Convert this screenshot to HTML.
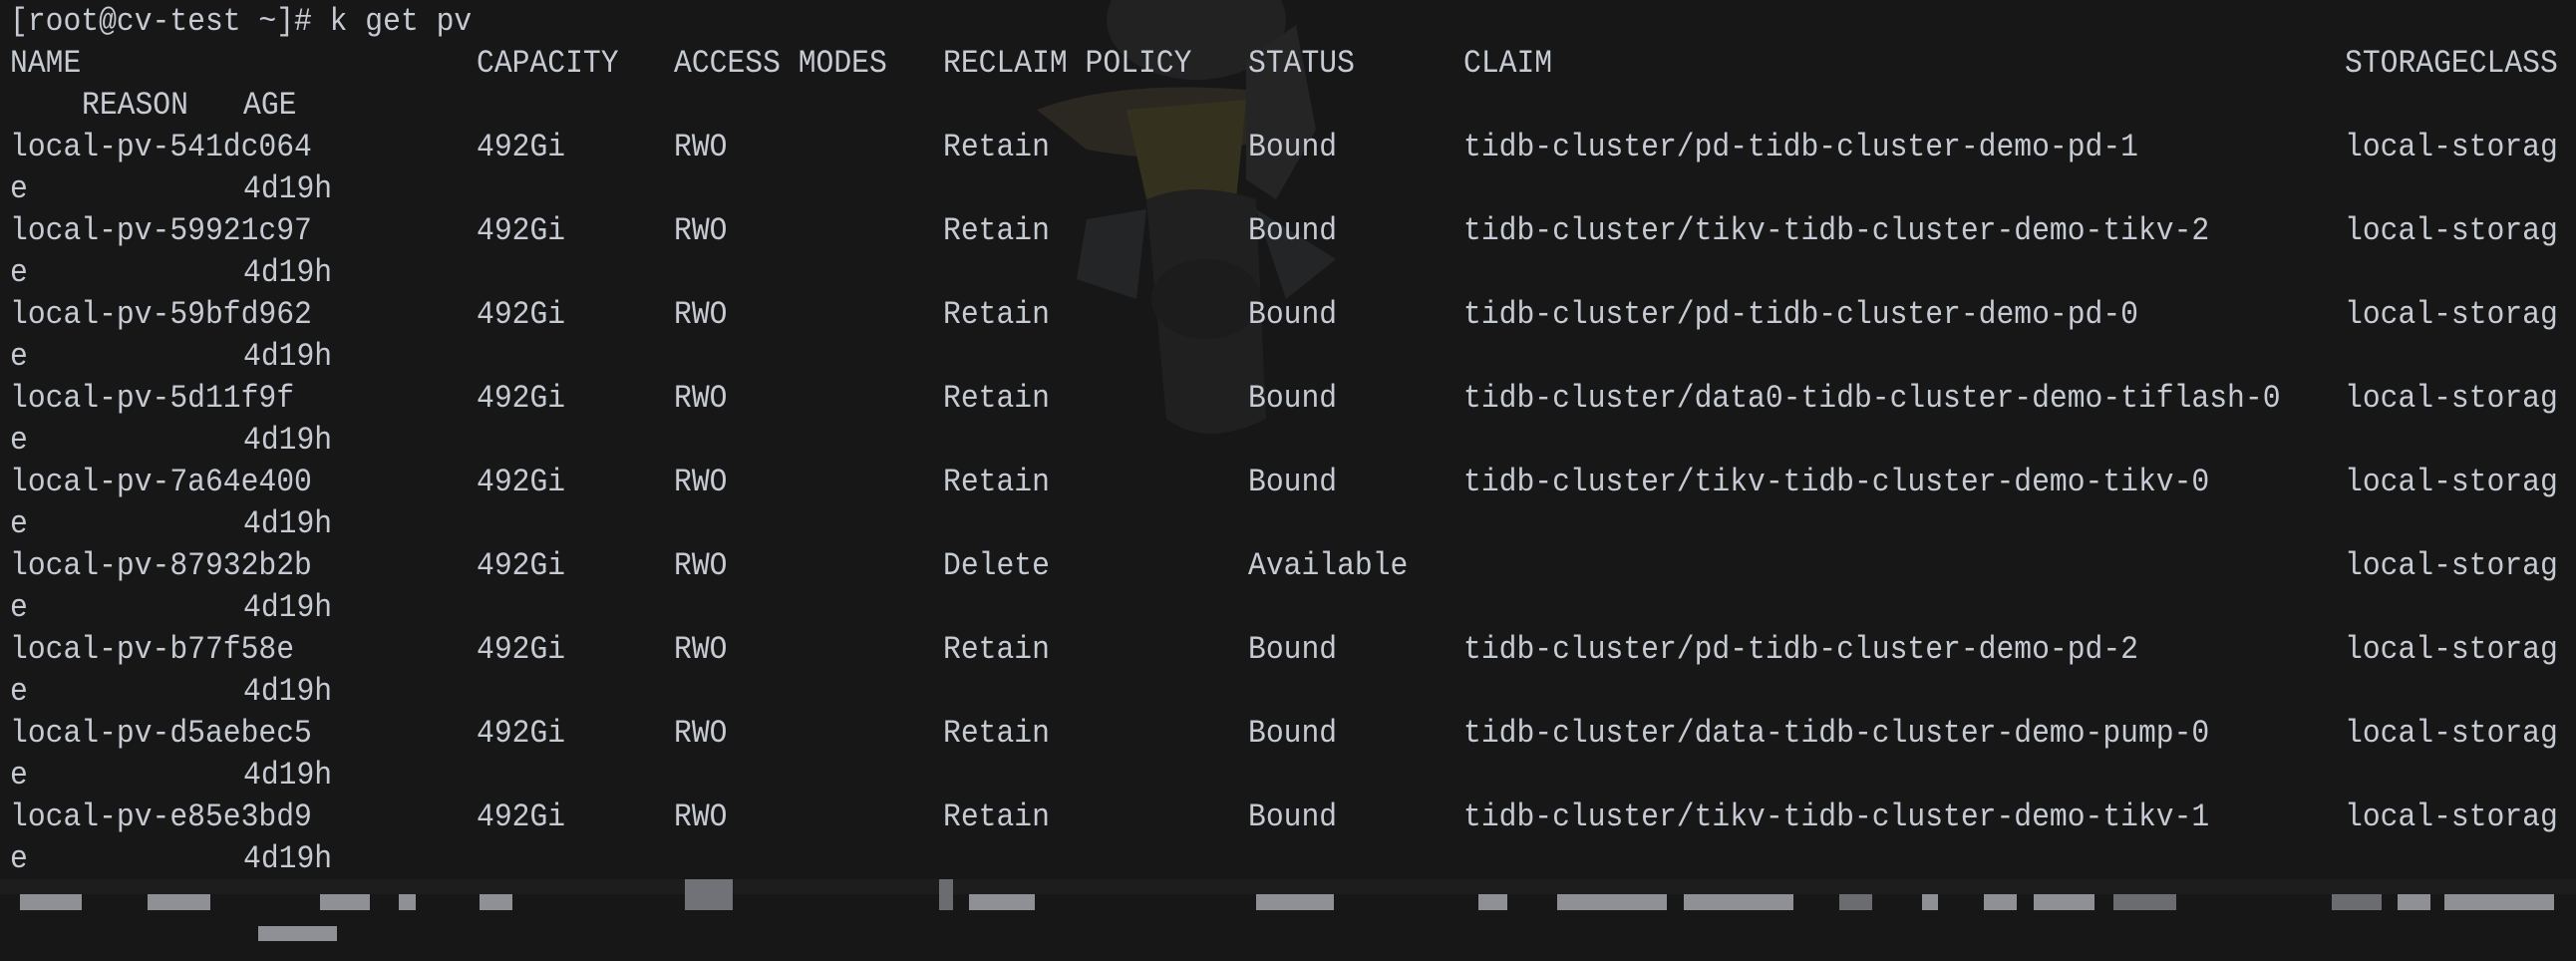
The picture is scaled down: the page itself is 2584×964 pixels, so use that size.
<!DOCTYPE html>
<html><head><meta charset="utf-8"><style>
html,body{margin:0;padding:0;background:#171717;}
body{width:2584px;height:964px;position:relative;overflow:hidden;font-family:"Liberation Mono",monospace;font-size:29.7px;color:#c6cad2;}
.l{position:absolute;left:0;height:42px;line-height:42px;white-space:pre;width:2584px;}
.l span{position:absolute;top:0;display:inline-block;transform:scaleY(1.1);}
.c0{left:10px}.c1{left:478px}.c2{left:676px}.c3{left:946px}.c4{left:1252px}.c5{left:1468px}.c6{left:2352px}.c7{left:244px}.c8{left:82px}
.b{position:absolute;background:#8e9096;}
.d{position:absolute;background:#2a2a2c;}
.w{position:absolute;}
</style></head><body>
<svg class="w" style="left:1000px;top:0" width="460" height="460" viewBox="0 0 460 460">
<ellipse cx="200" cy="20" rx="90" ry="60" fill="#222222"/>
<path d="M40 110 Q120 80 250 90 L260 140 Q200 170 90 150 Z" fill="#2a2820"/>
<path d="M130 110 L250 100 L240 200 L150 200 Z" fill="#34321e"/>
<path d="M250 60 L300 25 L320 130 L280 200 L250 180 Z" fill="#252525"/>
<path d="M150 200 Q200 180 260 200 L270 420 Q210 450 170 420 Z" fill="#202020"/>
<path d="M90 220 L150 210 L140 300 L80 280 Z" fill="#232527"/>
<path d="M260 210 L340 260 L290 300 Z" fill="#232527"/>
<ellipse cx="210" cy="300" rx="55" ry="40" fill="#1c1c1c"/>
</svg>
<div class="l" style="top:0"><span class="c0">[root@cv-test ~]# k get pv</span></div>
<div class="l" style="top:42px"><span class="c0">NAME</span><span class="c1">CAPACITY</span><span class="c2">ACCESS MODES</span><span class="c3">RECLAIM POLICY</span><span class="c4">STATUS</span><span class="c5">CLAIM</span><span class="c6">STORAGECLASS</span></div>
<div class="l" style="top:84px"><span class="c8">REASON</span><span class="c7">AGE</span></div>

<div class="l" style="top:126px"><span class="c0">local-pv-541dc064</span><span class="c1">492Gi</span><span class="c2">RWO</span><span class="c3">Retain</span><span class="c4">Bound</span><span class="c5">tidb-cluster/pd-tidb-cluster-demo-pd-1</span><span class="c6">local-storag</span></div>
<div class="l" style="top:168px"><span class="c0">e</span><span class="c7">4d19h</span></div>
<div class="l" style="top:210px"><span class="c0">local-pv-59921c97</span><span class="c1">492Gi</span><span class="c2">RWO</span><span class="c3">Retain</span><span class="c4">Bound</span><span class="c5">tidb-cluster/tikv-tidb-cluster-demo-tikv-2</span><span class="c6">local-storag</span></div>
<div class="l" style="top:252px"><span class="c0">e</span><span class="c7">4d19h</span></div>
<div class="l" style="top:294px"><span class="c0">local-pv-59bfd962</span><span class="c1">492Gi</span><span class="c2">RWO</span><span class="c3">Retain</span><span class="c4">Bound</span><span class="c5">tidb-cluster/pd-tidb-cluster-demo-pd-0</span><span class="c6">local-storag</span></div>
<div class="l" style="top:336px"><span class="c0">e</span><span class="c7">4d19h</span></div>
<div class="l" style="top:378px"><span class="c0">local-pv-5d11f9f</span><span class="c1">492Gi</span><span class="c2">RWO</span><span class="c3">Retain</span><span class="c4">Bound</span><span class="c5">tidb-cluster/data0-tidb-cluster-demo-tiflash-0</span><span class="c6">local-storag</span></div>
<div class="l" style="top:420px"><span class="c0">e</span><span class="c7">4d19h</span></div>
<div class="l" style="top:462px"><span class="c0">local-pv-7a64e400</span><span class="c1">492Gi</span><span class="c2">RWO</span><span class="c3">Retain</span><span class="c4">Bound</span><span class="c5">tidb-cluster/tikv-tidb-cluster-demo-tikv-0</span><span class="c6">local-storag</span></div>
<div class="l" style="top:504px"><span class="c0">e</span><span class="c7">4d19h</span></div>
<div class="l" style="top:546px"><span class="c0">local-pv-87932b2b</span><span class="c1">492Gi</span><span class="c2">RWO</span><span class="c3">Delete</span><span class="c4">Available</span><span class="c6">local-storag</span></div>
<div class="l" style="top:588px"><span class="c0">e</span><span class="c7">4d19h</span></div>
<div class="l" style="top:630px"><span class="c0">local-pv-b77f58e</span><span class="c1">492Gi</span><span class="c2">RWO</span><span class="c3">Retain</span><span class="c4">Bound</span><span class="c5">tidb-cluster/pd-tidb-cluster-demo-pd-2</span><span class="c6">local-storag</span></div>
<div class="l" style="top:672px"><span class="c0">e</span><span class="c7">4d19h</span></div>
<div class="l" style="top:714px"><span class="c0">local-pv-d5aebec5</span><span class="c1">492Gi</span><span class="c2">RWO</span><span class="c3">Retain</span><span class="c4">Bound</span><span class="c5">tidb-cluster/data-tidb-cluster-demo-pump-0</span><span class="c6">local-storag</span></div>
<div class="l" style="top:756px"><span class="c0">e</span><span class="c7">4d19h</span></div>
<div class="l" style="top:798px"><span class="c0">local-pv-e85e3bd9</span><span class="c1">492Gi</span><span class="c2">RWO</span><span class="c3">Retain</span><span class="c4">Bound</span><span class="c5">tidb-cluster/tikv-tidb-cluster-demo-tikv-1</span><span class="c6">local-storag</span></div>
<div class="l" style="top:840px"><span class="c0">e</span><span class="c7">4d19h</span></div>

<div class="d" style="left:0;top:882px;width:2584px;height:15px;background:#1d1d1e"></div>
<div class="b" style="left:20px;top:897px;width:62px;height:16px"></div>
<div class="b" style="left:148px;top:897px;width:63px;height:16px"></div>
<div class="b" style="left:321px;top:897px;width:50px;height:16px"></div>
<div class="b" style="left:400px;top:897px;width:17px;height:16px"></div>
<div class="b" style="left:481px;top:897px;width:33px;height:16px"></div>
<div class="b" style="left:687px;top:882px;width:48px;height:31px;background:#707278"></div>
<div class="b" style="left:942px;top:882px;width:14px;height:31px;background:#6a6c70"></div>
<div class="b" style="left:972px;top:897px;width:66px;height:16px"></div>
<div class="b" style="left:1260px;top:897px;width:78px;height:16px"></div>
<div class="b" style="left:1483px;top:897px;width:29px;height:16px"></div>
<div class="b" style="left:1562px;top:897px;width:110px;height:16px"></div>
<div class="b" style="left:1689px;top:897px;width:110px;height:16px"></div>
<div class="b" style="left:1845px;top:897px;width:33px;height:16px;background:#6a6c70"></div>
<div class="b" style="left:1928px;top:897px;width:16px;height:16px"></div>
<div class="b" style="left:1990px;top:897px;width:33px;height:16px"></div>
<div class="b" style="left:2040px;top:897px;width:61px;height:16px"></div>
<div class="b" style="left:2120px;top:897px;width:63px;height:16px;background:#6a6c70"></div>
<div class="b" style="left:2339px;top:897px;width:50px;height:16px;background:#6a6c70"></div>
<div class="b" style="left:2405px;top:897px;width:33px;height:16px"></div>
<div class="b" style="left:2452px;top:897px;width:110px;height:16px"></div>
<div class="b" style="left:259px;top:929px;width:79px;height:15px"></div>
</body></html>
